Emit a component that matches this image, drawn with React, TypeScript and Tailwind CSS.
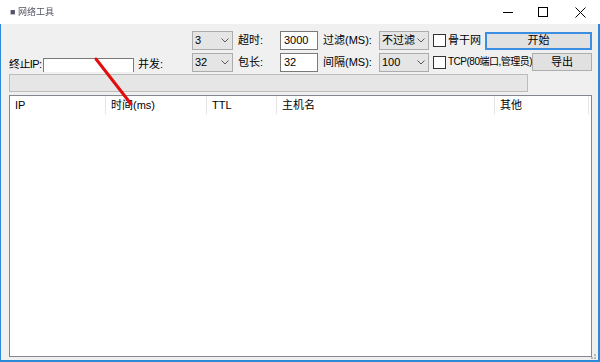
import React from "react";

const font = { fontFamily: '"Liberation Sans", "Noto Sans CJK SC", sans-serif' };

function Combo({ value, w }: { value: string; w: string }) {
  return (
    <div
      className={`flex h-[19px] shrink-0 items-center justify-between whitespace-nowrap border border-[#acacac] bg-[#e5e5e5] pl-[2px] pr-[3px] ${w}`}
    >
      <span>{value}</span>
      <svg width="8" height="5" viewBox="0 0 8 5" className="shrink-0">
        <path d="M0.5 0.5 L4 4 L7.5 0.5" fill="none" stroke="#5a5a5a" strokeWidth="1" />
      </svg>
    </div>
  );
}

function TextBox({ value, w }: { value: string; w: string }) {
  return (
    <div className={`flex h-[19px] shrink-0 items-center border border-[#7a7a7a] bg-white px-[3px] ${w}`}>
      {value}
    </div>
  );
}

function Check({ label, tight }: { label: string; tight?: boolean }) {
  return (
    <div className="flex items-center gap-[2px] whitespace-nowrap">
      <span className="h-[13px] w-[13px] shrink-0 border border-[#333] bg-white" />
      <span className={tight ? "text-[10px] tracking-[-0.5px]" : ""}>{label}</span>
    </div>
  );
}

const columns = [
  { label: "IP", w: "w-[96px]" },
  { label: "时间(ms)", w: "w-[101px]" },
  { label: "TTL", w: "w-[70px]" },
  { label: "主机名", w: "w-[218px]" },
  { label: "其他", w: "w-[94px]" },
];

export default function App() {
  return (
    <div
      className="relative flex h-[362px] w-[600px] flex-col overflow-hidden whitespace-nowrap bg-white text-[11px] leading-none text-black"
      style={font}
    >
      {/* title bar */}
      <div className="flex h-[24px] shrink-0 items-center justify-between bg-white">
        <span className="ml-[10px] text-[9px] text-[#556] blur-[0.6px]">■ 网络工具</span>
        <div className="flex h-full items-center">
          <div className="flex w-[35px] justify-center">
            <span className="block h-px w-[10px] bg-black" />
          </div>
          <div className="flex w-[35px] justify-center">
            <span className="block h-[10px] w-[10px] border border-black" />
          </div>
          <div className="flex w-[40px] justify-center">
            <svg width="11" height="11" viewBox="0 0 11 11">
              <path d="M0.5 0.5 L10.5 10.5 M10.5 0.5 L0.5 10.5" stroke="#000" strokeWidth="1" />
            </svg>
          </div>
        </div>
      </div>

      {/* body */}
      <div className="flex flex-1 flex-col border-b-[2px] border-l border-r-[2px] border-[#2b8bd9] bg-[#f0f0f0] pl-[8px] pr-[6px]">
        {/* row 1 */}
        <div className="mt-[7px] flex h-[19px] items-center">
          <div className="w-[183px] shrink-0" />
          <Combo value="3" w="w-[41px]" />
          <span className="ml-[5px] w-[42px] shrink-0">超时:</span>
          <TextBox value="3000" w="w-[38px]" />
          <span className="ml-[5px] w-[56px] shrink-0">过滤(MS):</span>
          <Combo value="不过滤" w="w-[50px]" />
          <div className="ml-[4px] w-[52px] shrink-0">
            <Check label="骨干网" />
          </div>
          <div className="flex h-[18px] w-[107px] shrink-0 items-center justify-center border-2 border-[#3c8ee0] bg-[#e1e1e1]">
            开始
          </div>
        </div>

        {/* row 2 */}
        <div className="mt-[2px] flex h-[20px] items-center">
          <div className="flex w-[183px] shrink-0 items-end self-stretch">
            <span className="mb-[2px] w-[34px] shrink-0 overflow-hidden tracking-[-0.6px]">终止IP:</span>
            <div className="h-[14px] w-[91px] shrink-0 border border-b-0 border-[#7a7a7a] bg-white" />
            <span className="mb-[2px] ml-[4px]">并发:</span>
          </div>
          <Combo value="32" w="w-[41px]" />
          <span className="ml-[5px] w-[42px] shrink-0">包长:</span>
          <TextBox value="32" w="w-[38px]" />
          <span className="ml-[5px] w-[56px] shrink-0">间隔(MS):</span>
          <Combo value="100" w="w-[50px]" />
          <div className="ml-[4px] w-[99px] shrink-0">
            <Check label="TCP(80端口,管理员)" tight />
          </div>
          <div className="flex h-[18px] w-[60px] shrink-0 items-center justify-center border border-[#adadad] bg-[#e1e1e1]">
            导出
          </div>
        </div>

        {/* progress */}
        <div className="mt-[2px] h-[18px] w-[519px] border border-[#bcbcbc] bg-[#e6e6e6]" />

        {/* list */}
        <div className="mb-[3px] mt-[3px] flex flex-1 flex-col border border-[#828790] bg-white">
          <div className="flex h-[19px] items-center border-b border-white">
            {columns.map((c) => (
              <div
                key={c.label}
                className={`flex h-full items-center border-r border-[#e5e5e5] pl-[5px] ${c.w}`}
              >
                {c.label}
              </div>
            ))}
          </div>
        </div>
        <div className="relative h-0">
          <div className="absolute -top-[6px] right-[-4px] grid grid-cols-3 gap-px">
            <span className="col-start-3 h-[2px] w-[2px] bg-[#b8b8b8]" />
            <span className="col-start-2 h-[2px] w-[2px] bg-[#b8b8b8]" />
            <span className="h-[2px] w-[2px] bg-[#b8b8b8]" />
          </div>
        </div>
      </div>

      {/* red annotation line */}
      <svg className="pointer-events-none absolute left-0 top-0" width="600" height="362">
        <line x1="96" y1="59" x2="131" y2="104" stroke="#e30d0d" strokeWidth="3" strokeLinecap="round" />
      </svg>
    </div>
  );
}
